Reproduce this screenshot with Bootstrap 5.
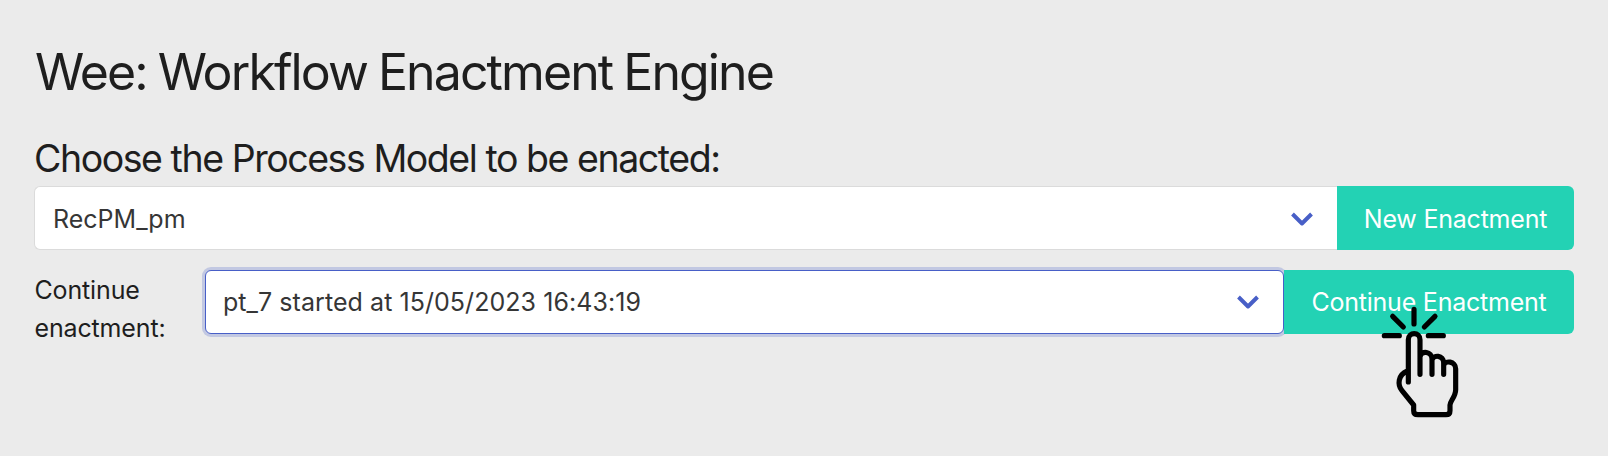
<!DOCTYPE html>
<html lang="en">
<head>
<meta charset="utf-8">
<meta name="viewport" content="width=device-width, initial-scale=1">
<title>Wee: Workflow Enactment Engine</title>
<link href="https://cdn.jsdelivr.net/npm/bootstrap@5.3.0/dist/css/bootstrap.min.css" rel="stylesheet">
<style>
body { background: #ebebeb; color: #1e1e1e; font-family: Inter, sans-serif; font-size: 25px; line-height: 38px; }
.page { padding: 42px 34px 0; min-height: 100vh; }
.page-title { font-size: 50px; line-height: 60px; font-weight: 400; margin: 0 0 35px; letter-spacing: -1.9px; word-spacing: -1.2px; padding-left: 1px; }
.page-subtitle { font-size: 37.5px; line-height: 44px; font-weight: 400; margin: 0 0 5px; letter-spacing: -1.45px; }
.pick { height: 64px; border: 1px solid #dbdbdb; border-radius: 6px; padding: 0 24px 0 17px; background: #fff; color: #363636; font-size: 25px; line-height: 62px; text-align: left; letter-spacing: .06px; }
.pick-first { border-radius: 6px 0 0 6px; border-right: 0; padding-top: 2px; padding-left: 18px; letter-spacing: 0; }
.pick.is-focused { border-color: #485fc7; box-shadow: 0 0 0 3px rgba(72,95,199,.25); }
.go { height: 64px; border: 0; border-radius: 0 6px 6px 0; background: #23d2b4; color: #fff; font-size: 25px; line-height: 64px; padding: 0; letter-spacing: -.22px; }
.go:hover { background: #23d2b4; color: #fff; }
.go-new { width: 237px; padding-top: 1px; }
.go-continue { width: 290px; }
.row-label { width: 171px; padding: 1px 0 0 .5px; letter-spacing: -.15px; }
.click-hand { left: 76px; top: 20px; pointer-events: none; z-index: 2; }
</style>
</head>
<body>
<main class="page">
  <h1 class="page-title">Wee: Workflow Enactment Engine</h1>
  <h2 class="page-subtitle">Choose the Process Model to be enacted:</h2>
  <div class="d-flex">
    <button type="button" class="pick pick-first flex-grow-1 d-flex align-items-center justify-content-between">RecPM_pm
      <svg width="22" height="16" viewBox="0 0 22 16" fill="none" stroke="#485fc7" stroke-width="3.9" stroke-linejoin="round"><path d="M1.5 3 11 12.500 20.500 3"/></svg>
    </button>
    <button type="button" class="btn go go-new">New Enactment</button>
  </div>
  <div class="d-flex" style="margin-top:20px">
    <label class="row-label flex-shrink-0">Continue<br>enactment:</label>
    <button type="button" class="pick is-focused flex-grow-1 d-flex align-items-center justify-content-between">pt_7 started at 15/05/2023 16:43:19
      <svg width="22" height="16" viewBox="0 0 22 16" fill="none" stroke="#485fc7" stroke-width="3.9" stroke-linejoin="round"><path d="M1.5 3 11 12.500 20.500 3"/></svg>
    </button>
    <div class="position-relative">
      <button type="button" class="btn go go-continue">Continue Enactment</button>
      <svg class="click-hand position-absolute" width="120" height="140" viewBox="0 0 360 420" fill="none" stroke="#000" stroke-width="15.5" stroke-linecap="round" stroke-linejoin="round">
        <path d="M162 58V102M98 79 130 111M225 79 193 111M73 137H118M205 137H250"/>
        <path d="M145 276V149C145 125 180 125 180 149V253M180 200C184 180 216 184 216 207V253M216 210C220 193 251 195 251 218V253M251 226C255 210 287 213 287 236V299C287 320 270 333 270 345V362Q270 374 258 374H174Q161 374 161 362V345L126 302C112 285 113 255 142 243"/>
      </svg>
    </div>
  </div>
</main>
<script src="https://cdn.jsdelivr.net/npm/bootstrap@5.3.0/dist/js/bootstrap.bundle.min.js"></script>
</body>
</html>
